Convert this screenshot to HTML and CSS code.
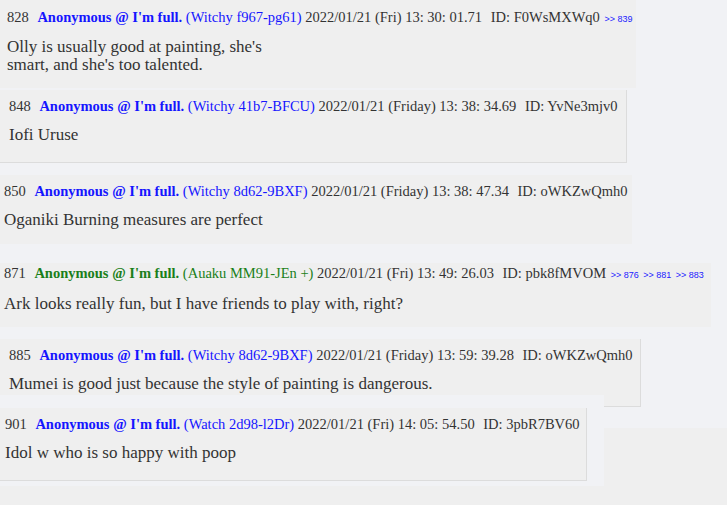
FILE: index.html
```html
<!DOCTYPE html>
<html>
  <head>
    <title>Thread</title>
    <link rel="stylesheet" href="styles.css">
  </head>
  <body>
    <div class="thread">
      <div class="post p1">
        <div class="head">
          <span class="num">828</span> <span class="name">Anonymous @ I'm full.</span> <span class="trip">(Witchy f967-pg61)</span> <span class="date">2022/01/21 (Fri) 13: 30: 01.71</span> <span class="uid">ID: F0WsMXWq0</span> <span class="refs"><a>&gt;&gt; 839</a></span>
        </div>
        <div class="body">Olly is usually good at painting, she's<br>smart, and she's too talented.</div>
      </div>

      <div class="post p2 framed">
        <div class="head">
          <span class="num">848</span> <span class="name">Anonymous @ I'm full.</span> <span class="trip">(Witchy 41b7-BFCU)</span> <span class="date">2022/01/21 (Friday) 13: 38: 34.69</span> <span class="uid">ID: YvNe3mjv0</span>
        </div>
        <div class="body">Iofi Uruse</div>
      </div>

      <div class="post p3">
        <div class="head">
          <span class="num">850</span> <span class="name">Anonymous @ I'm full.</span> <span class="trip">(Witchy 8d62-9BXF)</span> <span class="date">2022/01/21 (Friday) 13: 38: 47.34</span> <span class="uid">ID: oWKZwQmh0</span>
        </div>
        <div class="body">Oganiki Burning measures are perfect</div>
      </div>

      <div class="post p4">
        <div class="head">
          <span class="num">871</span> <span class="name green">Anonymous @ I'm full.</span> <span class="trip green">(Auaku MM91-JEn +)</span> <span class="date">2022/01/21 (Fri) 13: 49: 26.03</span> <span class="uid">ID: pbk8fMVOM</span> <span class="refs"><a>&gt;&gt; 876</a> <a>&gt;&gt; 881</a> <a>&gt;&gt; 883</a></span>
        </div>
        <div class="body">Ark looks really fun, but I have friends to play with, right?</div>
      </div>

      <div class="post p5 framed">
        <div class="head">
          <span class="num">885</span> <span class="name">Anonymous @ I'm full.</span> <span class="trip">(Witchy 8d62-9BXF)</span> <span class="date">2022/01/21 (Friday) 13: 59: 39.28</span> <span class="uid">ID: oWKZwQmh0</span>
        </div>
        <div class="body">Mumei is good just because the style of painting is dangerous.</div>
      </div>

      <div class="tail">
        <div class="tail-row">
          <div class="piece">
            <div class="post p6 framed">
              <div class="head">
                <span class="num">901</span> <span class="name">Anonymous @ I'm full.</span> <span class="trip">(Watch 2d98-l2Dr)</span> <span class="date">2022/01/21 (Fri) 14: 05: 54.50</span> <span class="uid">ID: 3pbR7BV60</span>
              </div>
              <div class="body">Idol w who is so happy with poop</div>
            </div>
          </div>
          <div class="tail-side"></div>
        </div>
        <div class="tail-bottom"></div>
      </div>
    </div>
  </body>
</html>
```

FILE: styles.css
```css
html, body {
  margin: 0;
  padding: 0;
}
body {
  background: #f1f2f5;
  color: #333;
  font-family: "Liberation Serif", "Times New Roman", serif;
  width: 727px;
  height: 505px;
  overflow: hidden;
}

.post {
  background: #efefef;
  box-sizing: border-box;
  padding: 7px 0 15px 7px;
}
.post.framed {
  border-right: 1px solid #dcdcdc;
  border-bottom: 1px solid #dcdcdc;
}

.head {
  font-size: 14.5px;
  line-height: 18px;
  white-space: nowrap;
}
.head .num {
  margin-right: 5px;
}
.head .name {
  color: #1515ff;
  font-weight: bold;
}
.head .trip {
  color: #1515ff;
}
.head .green {
  color: #1a7f1a;
}
.head .uid {
  margin-left: 5px;
}
.refs {
  font-family: "Liberation Sans", Arial, sans-serif;
  font-size: 9px;
  margin-left: 1px;
}
.refs a {
  color: #2222ff;
  margin-right: 2px;
}

.body {
  font-size: 17px;
  line-height: 18px;
  margin-top: 11px;
}

.p1 {
  width: 636px;
  height: 88px;
  padding-top: 8px;
}
.p1 .body {
  margin-top: 10px;
}
.p2 {
  width: 627px;
  height: 73px;
  margin-top: 2px;
  padding-left: 9px;
}
.p3 {
  width: 632px;
  height: 69px;
  margin-top: 12px;
  padding-left: 4px;
}
.p4 {
  width: 711px;
  height: 64px;
  margin-top: 19px;
  padding-top: 1px;
  padding-left: 4px;
}
.p5 {
  width: 641px;
  height: 68px;
  margin-top: 12px;
  padding-left: 9px;
  border-bottom: none;
}

.tail {
  margin-top: -12px;
}
.tail-row {
  display: flex;
}
.piece {
  width: 604px;
  height: 91px;
  background: #f1f2f5;
  padding-top: 13px;
  box-sizing: border-box;
}
.p6 {
  width: 587px;
  height: 73px;
  padding-left: 5px;
}
.tail-side {
  flex: 1;
  margin-top: 33px;
  background: #efefef;
}
.tail-bottom {
  height: 30px;
  background: #efefef;
}
```
